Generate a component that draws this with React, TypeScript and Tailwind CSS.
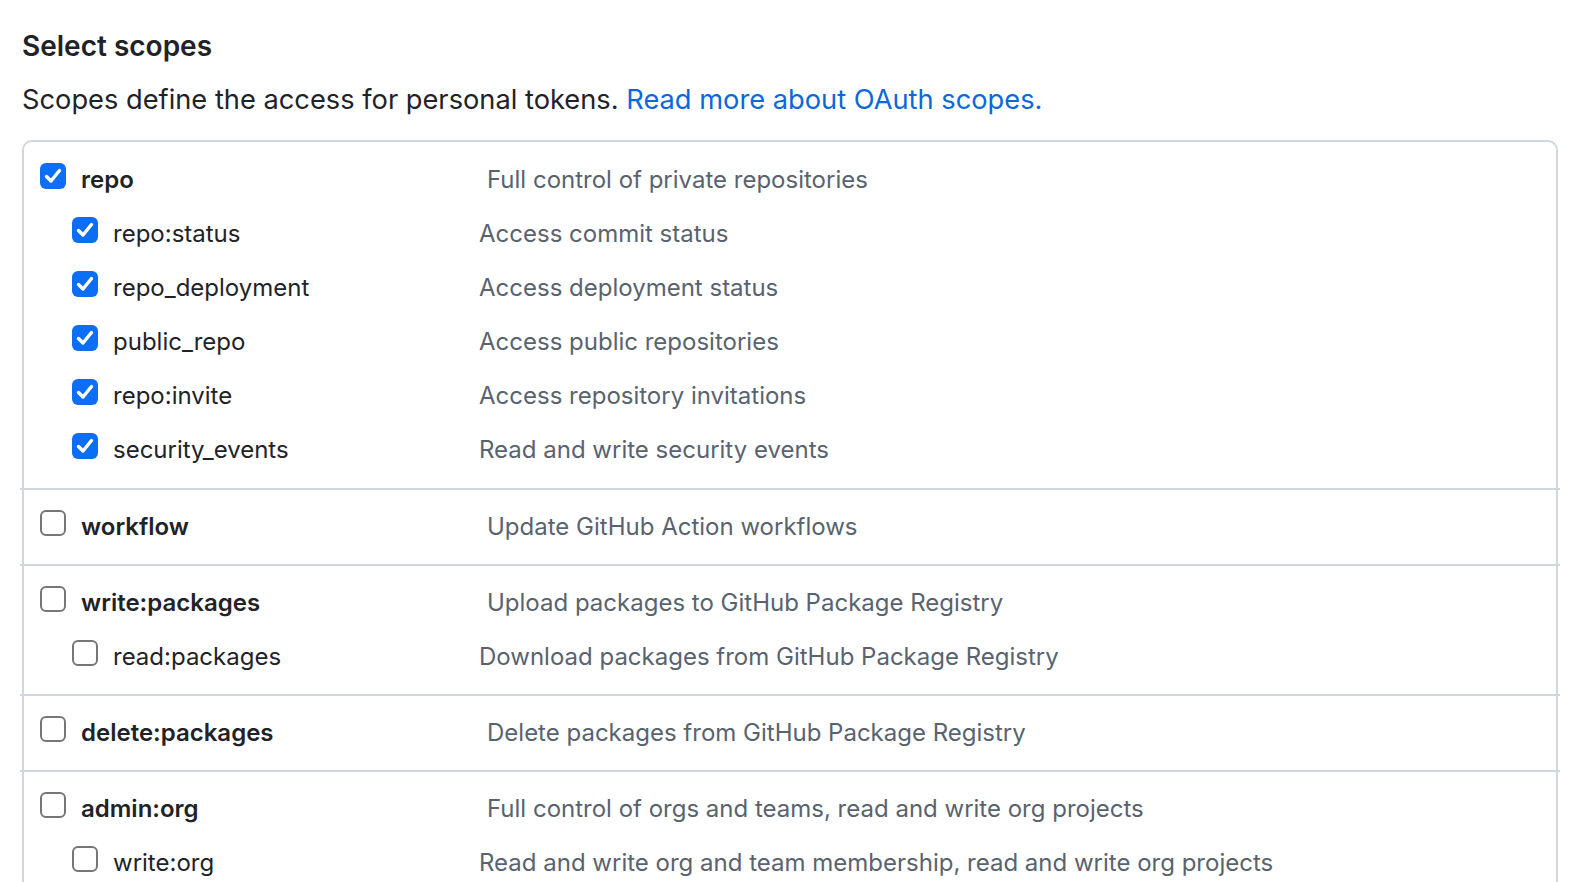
import React from "react";

type Sub = { name: string; desc: string; checked: boolean };
type Group = { name: string; desc: string; checked: boolean; subs: Sub[] };

const groups: Group[] = [
  {
    name: "repo",
    desc: "Full control of private repositories",
    checked: true,
    subs: [
      { name: "repo:status", desc: "Access commit status", checked: true },
      { name: "repo_deployment", desc: "Access deployment status", checked: true },
      { name: "public_repo", desc: "Access public repositories", checked: true },
      { name: "repo:invite", desc: "Access repository invitations", checked: true },
      { name: "security_events", desc: "Read and write security events", checked: true },
    ],
  },
  { name: "workflow", desc: "Update GitHub Action workflows", checked: false, subs: [] },
  {
    name: "write:packages",
    desc: "Upload packages to GitHub Package Registry",
    checked: false,
    subs: [{ name: "read:packages", desc: "Download packages from GitHub Package Registry", checked: false }],
  },
  { name: "delete:packages", desc: "Delete packages from GitHub Package Registry", checked: false, subs: [] },
  {
    name: "admin:org",
    desc: "Full control of orgs and teams, read and write org projects",
    checked: false,
    subs: [
      { name: "write:org", desc: "Read and write org and team membership, read and write org projects", checked: false },
      { name: "read:org", desc: "Read org and team membership, read org projects", checked: false },
      { name: "manage_runners:org", desc: "Manage org runners and runner groups", checked: false },
    ],
  },
];

function Box({ checked }: { checked: boolean }) {
  if (checked) {
    return (
      <span className="mb-[8px] flex h-[26px] w-[26px] shrink-0 items-center justify-center rounded-[6px] bg-[#0b6ef5]">
        <svg width="26" height="26" viewBox="0 0 26 26" fill="none">
          <path d="M6.5 13.5 L11 18 L19.5 7.5" stroke="white" strokeWidth="3.4" strokeLinecap="round" strokeLinejoin="round" />
        </svg>
      </span>
    );
  }
  return <span className="mb-[8px] block h-[26px] w-[26px] shrink-0 rounded-[6px] border-2 border-[#767676] bg-white" />;
}

function Row({ name, desc, checked, top }: { name: string; desc: string; checked: boolean; top: boolean }) {
  return (
    <div className="flex h-[54px] items-center">
      <div className={top ? "flex w-[463px] shrink-0 items-center gap-[15px] pl-[16px]" : "flex w-[455px] shrink-0 items-center gap-[15px] pl-[48px]"}>
        <Box checked={checked} />
        <span className={top ? "font-semibold text-[#1f2328]" : "text-[#1f2328]"}>{name}</span>
      </div>
      <span className="whitespace-nowrap text-[#59636e]">{desc}</span>
    </div>
  );
}

export default function App() {
  return (
    <div
      className="h-[882px] overflow-hidden bg-white pl-[22px] pt-[26px] text-[24px] leading-[30px]"
      style={{ fontFamily: "Inter, 'Noto Sans', sans-serif" }}
    >
      <h3 className="text-[28px] font-semibold leading-[40px] text-[#1f2328]">Select scopes</h3>
      <p className="mt-[14px] text-[27.25px] leading-[40px] text-[#1f2328]">
        Scopes define the access for personal tokens.{" "}
        <a className="text-[#0969da]">Read more about OAuth scopes.</a>
      </p>
      <div className="mt-[20px] w-[1536px] rounded-t-[10px] border-2 border-b-0 border-[#d0d7de]">
        {groups.map((g, i) => (
          <div key={g.name}>
            {i > 0 && <div className="-mx-[4px] h-[2px] bg-[#d0d7de]" />}
            <div className={i === 0 ? "pb-[11px] pt-[11px]" : "py-[10px]"}>
              <Row name={g.name} desc={g.desc} checked={g.checked} top />
              {g.subs.map((s) => (
                <Row key={s.name} name={s.name} desc={s.desc} checked={s.checked} top={false} />
              ))}
            </div>
          </div>
        ))}
      </div>
    </div>
  );
}
